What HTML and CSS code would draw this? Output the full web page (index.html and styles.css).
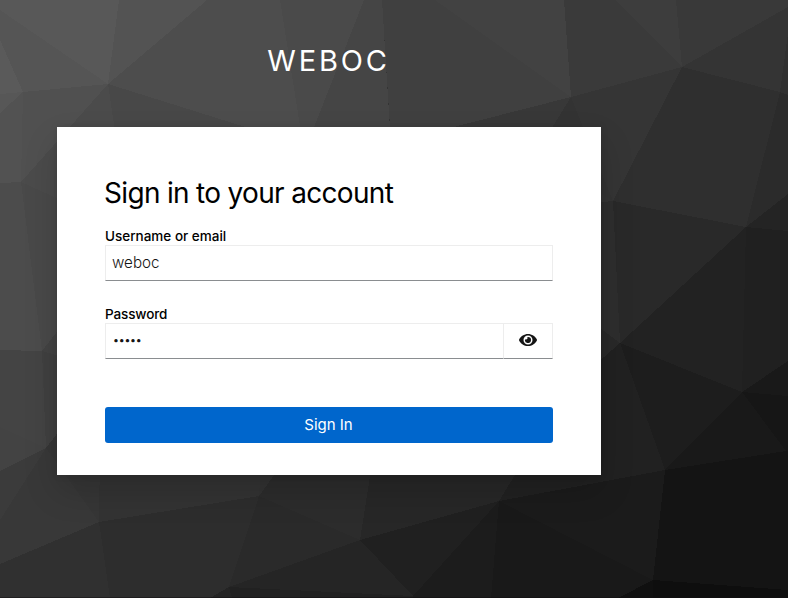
FILE: index.html
```html
<!DOCTYPE html>
<html lang="en">
<head>
<meta charset="utf-8">
<title>Sign in to WEBOC</title>
<link rel="stylesheet" href="styles.css">
</head>
<body>
<svg class="backdrop" viewBox="0 0 788 598" aria-hidden="true">
  <rect width="788" height="598" fill="#343434"/>
  <path fill="#585858" d="M0 0H119L108 84L0 10Z"/>
  <path fill="#535353" d="M119 0H207L108 84Z"/>
  <path fill="#555" d="M0 10L108 84L23 92L0 40Z"/>
  <path fill="#5a5a5a" d="M0 40L23 92L0 94Z"/>
  <path fill="#575757" d="M0 94L23 92L0 113Z"/>
  <path fill="#525252" d="M0 113L23 92L21 182L0 183Z"/>
  <path fill="#505050" d="M23 92L108 84L21 182Z"/>
  <path fill="#4d4d4d" d="M207 0H280L303 145L108 84Z"/>
  <path fill="#4a4a4a" d="M280 0H364L307 145H303Z"/>
  <path fill="#454545" d="M364 0H382L391 145H307Z"/>
  <path fill="#484848" d="M108 84L303 145H117Z"/>
  <path fill="#4b4b4b" d="M108 84L117 145V230L21 182Z"/>
  <path fill="#404040" d="M382 0H435L571 97L391 143Z"/>
  <path fill="#424242" d="M435 0H564L571 97Z"/>
  <path fill="#3a3a3a" d="M564 0H615L682 67L571 97Z"/>
  <path fill="#3d3d3d" d="M615 0H676L682 67Z"/>
  <path fill="#393939" d="M676 0H788V7L682 67Z"/>
  <path fill="#343434" d="M682 67L788 7V33L780 92Z"/>
  <path fill="#303030" d="M788 33V95L780 92Z"/>
  <path fill="#383838" d="M571 97L391 143L535 155Z"/>
  <path fill="#333" d="M571 97L535 155L613 201Z"/>
  <path fill="#353535" d="M571 97L682 67L613 201Z"/>
  <path fill="#2f2f2f" d="M682 67L780 92L746 227L613 201Z"/>
  <path fill="#2b2b2b" d="M780 92L788 95V194L746 227Z"/>
  <path fill="#242424" d="M788 194V231L746 227Z"/>
  <path fill="#2e2e2e" d="M613 201L620 343L580 313V204Z"/>
  <path fill="#292929" d="M613 201L746 227L620 343Z"/>
  <path fill="#222" d="M746 227L742 392L620 343Z"/>
  <path fill="#202020" d="M746 227L788 231V361L742 392Z"/>
  <path fill="#191919" d="M788 361V396L742 392Z"/>
  <path fill="#161616" d="M742 392L788 396V451L786 451Z"/>
  <path fill="#292929" d="M580 313L620 343L580 378Z"/>
  <path fill="#212121" d="M620 343L665 470L499 501L514 475L580 378Z"/>
  <path fill="#1d1d1d" d="M620 343L742 392L665 470Z"/>
  <path fill="#191919" d="M742 392L786 451L665 470Z"/>
  <path fill="#141414" d="M665 470L786 451H788V590L653 580Z"/>
  <path fill="#1b1b1b" d="M499 501L665 470L653 580Z"/>
  <path fill="#191919" d="M499 501L653 580L618 598H491Z"/>
  <path fill="#101010" d="M653 580V598H618Z"/>
  <path fill="#0e0e0e" d="M653 580L788 590V598H653Z"/>
  <path fill="#1c1c1c" d="M499 501L491 598H411L413 596Z"/>
  <path fill="#202020" d="M499 501L413 596L360 540Z"/>
  <path fill="#272727" d="M371 470H518L499 501L360 540Z"/>
  <path fill="#2c2c2c" d="M275 470H371L360 540L259 496Z"/>
  <path fill="#2a2a2a" d="M259 496L360 540L229 587Z"/>
  <path fill="#252525" d="M360 540L413 596L229 587Z"/>
  <path fill="#212121" d="M229 587L413 596V598H232Z"/>
  <path fill="#242424" d="M229 587L232 598H210Z"/>
  <path fill="#2d2d2d" d="M99 522L259 496L229 587L210 598H110Z"/>
  <path fill="#333" d="M100 450H262L259 496L99 522Z"/>
  <path fill="#323232" d="M262 450L285 460L259 496Z"/>
  <path fill="#303030" d="M0 564L99 522L110 598H0Z"/>
  <path fill="#383838" d="M46 448L0 520V564L99 522Z"/>
  <path fill="#363636" d="M46 448L70 417L100 450L99 522Z"/>
  <path fill="#3b3b3b" d="M0 471L46 448L0 520Z"/>
  <path fill="#434343" d="M0 427L46 448L0 471Z"/>
  <path fill="#444" d="M0 350L42 351L46 448L0 427Z"/>
  <path fill="#404040" d="M42 351L70 359V417L46 448Z"/>
  <path fill="#434343" d="M42 351L70 315V359Z"/>
  <path fill="#4c4c4c" d="M0 183L21 182L42 351L0 350Z"/>
  <path fill="#494949" d="M21 182L70 206V315L42 351Z"/>
  <path fill="#494949" d="M21 182L70 204V210Z"/>
  <path class="bottom-edge" d="M0 596.5H788V598H0Z"/>
</svg>
<div class="login">
  <header class="brand">WEBOC</header>
  <main class="card">
    <h1 class="title">Sign in to your account</h1>
    <form>
      <div class="group">
        <label class="label user-label" for="username">Username or email</label>
        <input class="control" id="username" type="text" value="weboc">
      </div>
      <div class="group">
        <label class="label pass-label" for="password">Password</label>
        <div class="password-row">
          <div class="control dots" id="password">•••••</div>
          <button class="reveal" type="button" aria-label="Show password">
            <svg class="eye" viewBox="0 0 576 512"><path fill="#151515" d="M572.52 241.4C518.29 135.59 410.93 64 288 64S57.68 135.64 3.48 241.41a32.35 32.35 0 0 0 0 29.19C57.71 376.41 165.07 448 288 448s230.32-71.64 284.52-177.41a32.35 32.35 0 0 0 0-29.19zM288 400a144 144 0 1 1 144-144 143.93 143.93 0 0 1-144 144zm0-240a95.31 95.31 0 0 0-25.31 3.79 47.85 47.85 0 0 1-66.9 66.9A95.78 95.78 0 1 0 288 160z"/></svg>
          </button>
        </div>
      </div>
      <button class="submit" type="button">Sign In</button>
    </form>
  </main>
</div>
</body>
</html>
```
FILE: styles.css
```css
* { box-sizing: border-box; }
body {
  margin: 0;
  height: 598px;
  overflow: hidden;
  background: #343434;
  font-family: Inter, "Open Sans", sans-serif;
  color: #000;
}
.backdrop {
  position: absolute;
  inset: 0;
  z-index: -1;
  width: 788px;
  height: 598px;
  shape-rendering: crispEdges;
}
.bottom-edge { fill: #0f0d0f; opacity: .5; }
.login { width: 544px; margin-left: 57px; }
.brand {
  height: 127px;
  padding: 42px 1px 0 0;
  text-align: center;
  font-size: 29px;
  font-weight: 400;
  line-height: 38px;
  letter-spacing: 2.8px;
  color: #fff;
}
.card {
  height: 348px;
  padding: 48px 48px 32px 47px;
  background: #fff;
  box-shadow: 0 16px 32px rgba(3, 3, 3, .16), 0 0 8px rgba(3, 3, 3, .1);
}
form { padding-left: 1px; }
.title {
  margin: 0 0 16px;
  height: 37px;
  font-size: 28px;
  font-weight: 400;
  line-height: 37px;
  letter-spacing: -.68px;
  white-space: nowrap;
}
.group { height: 78px; }
.label {
  display: block;
  height: 17px;
  font-size: 13.5px;
  font-weight: 500;
  line-height: 17px;
}
.pass-label { letter-spacing: -.12px; }
.control {
  display: block;
  width: 100%;
  height: 36px;
  padding: 0 6px;
  border: 1px solid #ededed;
  border-bottom-color: #8a8d90;
  border-radius: 0;
  outline: 0;
  background: #fff;
  color: #151515;
  font: 300 15.2px/34px Inter, sans-serif;
}
input.control { padding-bottom: 2px; }
.password-row { display: flex; }
.dots {
  flex: 1;
  padding-left: 7px;
  font-size: 10.5px;
  font-weight: 400;
  line-height: 33px;
  letter-spacing: -.2px;
}
.reveal {
  width: 49px;
  height: 36px;
  padding: 0 1px 2px 0;
  display: grid;
  place-items: center;
  border: 1px solid #ededed;
  border-left: 0;
  border-bottom-color: #8a8d90;
  background: #fff;
}
.eye { width: 18px; height: 16px; }
.submit {
  display: block;
  width: 448px;
  height: 36px;
  margin-top: 23px;
  padding: 0 1px 0 0;
  border: 0;
  border-radius: 3px;
  background: #06c;
  color: #fff;
  font: 400 15px/36px Inter, sans-serif;
}
```
